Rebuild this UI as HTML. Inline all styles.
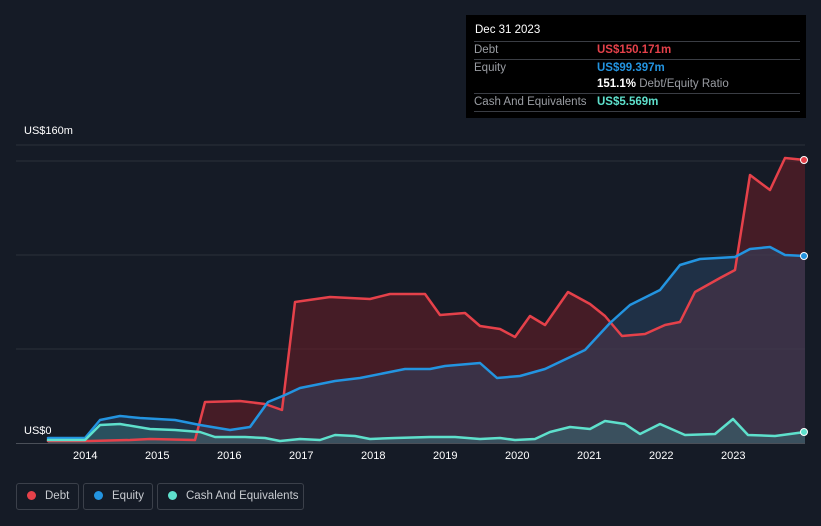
<!DOCTYPE html><html style="height:526px;overflow:hidden"><head><style>
body{margin:0;width:821px;height:526px;background:#151b26;font-family:"Liberation Sans",sans-serif;overflow:hidden;position:relative}
.tt{position:absolute;left:466px;top:15px;width:340px;height:103px;background:#000;color:#fff;font-size:11.5px}
.row{position:absolute;left:8px;width:326px;border-top:1px solid #3a3d44;height:17px;line-height:17px}
.l{color:#9a9da3}
.leg{position:absolute;top:483px;height:27px;border:1px solid #3b404a;border-radius:3px;color:#c8cbd0;font-size:11.5px;line-height:25px;box-sizing:border-box;white-space:nowrap}
.leg i{display:inline-block;width:9px;height:9px;border-radius:50%;margin:0 9px 0 10px;vertical-align:-1px}
.ax{position:absolute;top:450px;color:#fff;font-size:11px}
</style></head><body>
<svg width="821" height="526" style="position:absolute;left:0;top:0">
<g stroke="#2a303b" stroke-width="1"><line x1="16" y1="145" x2="805" y2="145"/><line x1="16" y1="161" x2="805" y2="161"/><line x1="16" y1="255" x2="805" y2="255"/><line x1="16" y1="349" x2="805" y2="349"/></g>
<line x1="16" y1="443.5" x2="805" y2="443.5" stroke="#4a4f58"/>
<polygon fill="rgba(110,30,38,0.55)" points="48,441 90,441 130,440 150,439 195,440 205,402 240,401 265,404 282,410 295,302 330,297 370,299 390,294 425,294 440,315 465,313 480,326 500,329 515,337 530,316 545,325 568,292 590,304 605,316 622,336 645,334 665,325 680,322 695,292 720,278 735,270 750,175 770,190 785,158 805,160 805,443 48,443"/>
<polygon fill="rgba(45,75,110,0.45)" points="48,438 85,438 100,420 120,416 140,418 175,420 200,425 230,430 250,427 268,402 285,395 300,388 335,381 360,378 405,369 430,369 445,366 480,363 497,378 520,376 545,369 585,350 610,323 630,305 660,290 680,265 700,259 735,257 750,249 770,247 785,255 805,256 805,443 48,443"/>
<polygon fill="rgba(60,140,140,0.35)" points="48,440 85,440 100,425 120,424 150,429 175,430 200,432 215,437 245,437 265,438 280,441 300,439 320,440 335,435 355,436 370,439 395,438 430,437 455,437 480,439 500,438 515,440 535,439 550,432 570,427 590,429 605,421 625,424 640,434 660,424 685,435 715,434 733,419 748,435 775,436 805,432 805,443 48,443"/>
<g fill="none" stroke-width="2.5" stroke-linejoin="round" stroke-linecap="round">
<polyline stroke="#e5414a" points="48,441 90,441 130,440 150,439 195,440 205,402 240,401 265,404 282,410 295,302 330,297 370,299 390,294 425,294 440,315 465,313 480,326 500,329 515,337 530,316 545,325 568,292 590,304 605,316 622,336 645,334 665,325 680,322 695,292 720,278 735,270 750,175 770,190 785,158 805,160"/>
<polyline stroke="#2394e0" points="48,438 85,438 100,420 120,416 140,418 175,420 200,425 230,430 250,427 268,402 285,395 300,388 335,381 360,378 405,369 430,369 445,366 480,363 497,378 520,376 545,369 585,350 610,323 630,305 660,290 680,265 700,259 735,257 750,249 770,247 785,255 805,256"/>
<polyline stroke="#5ee0cc" points="48,440 85,440 100,425 120,424 150,429 175,430 200,432 215,437 245,437 265,438 280,441 300,439 320,440 335,435 355,436 370,439 395,438 430,437 455,437 480,439 500,438 515,440 535,439 550,432 570,427 590,429 605,421 625,424 640,434 660,424 685,435 715,434 733,419 748,435 775,436 805,432"/>
</g>
<circle cx="804" cy="160" r="3.5" fill="#e5414a" stroke="#fff" stroke-width="1"/>
<circle cx="804" cy="256" r="3.5" fill="#2394e0" stroke="#fff" stroke-width="1"/>
<circle cx="804" cy="432" r="3.5" fill="#5ee0cc" stroke="#fff" stroke-width="1"/>
</svg>
<div style="position:absolute;left:24px;top:125px;color:#fff;font-size:11px">US$160m</div>
<div style="position:absolute;left:24px;top:425px;color:#fff;font-size:11px">US$0</div>
<div class="ax" style="left:73px">2014</div><div class="ax" style="left:145px">2015</div><div class="ax" style="left:217px">2016</div><div class="ax" style="left:289px">2017</div><div class="ax" style="left:361px">2018</div><div class="ax" style="left:433px">2019</div><div class="ax" style="left:505px">2020</div><div class="ax" style="left:577px">2021</div><div class="ax" style="left:649px">2022</div><div class="ax" style="left:721px">2023</div>
<div class="tt">
<div style="position:absolute;left:9px;top:9px">Dec 31 2023</div>
<div class="row" style="top:26px"><span class="l">Debt</span><span style="position:absolute;left:123px;color:#e5414a;font-weight:bold">US$150.171m</span></div>
<div class="row" style="top:44px"><span class="l">Equity</span><span style="position:absolute;left:123px;color:#2394e0;font-weight:bold">US$99.397m</span></div>
<div style="position:absolute;left:131px;top:61px;line-height:17px"><b>151.1%</b> <span class="l">Debt/Equity Ratio</span></div>
<div class="row" style="top:78px;border-bottom:1px solid #3a3d44"><span class="l">Cash And Equivalents</span><span style="position:absolute;left:123px;color:#5ee0cc;font-weight:bold">US$5.569m</span></div>
</div>
<div class="leg" style="left:16px;width:63px"><i style="background:#e5414a"></i>Debt</div>
<div class="leg" style="left:83px;width:70px"><i style="background:#2394e0"></i>Equity</div>
<div class="leg" style="left:157px;width:147px"><i style="background:#5ee0cc"></i>Cash And Equivalents</div>
</body></html>
